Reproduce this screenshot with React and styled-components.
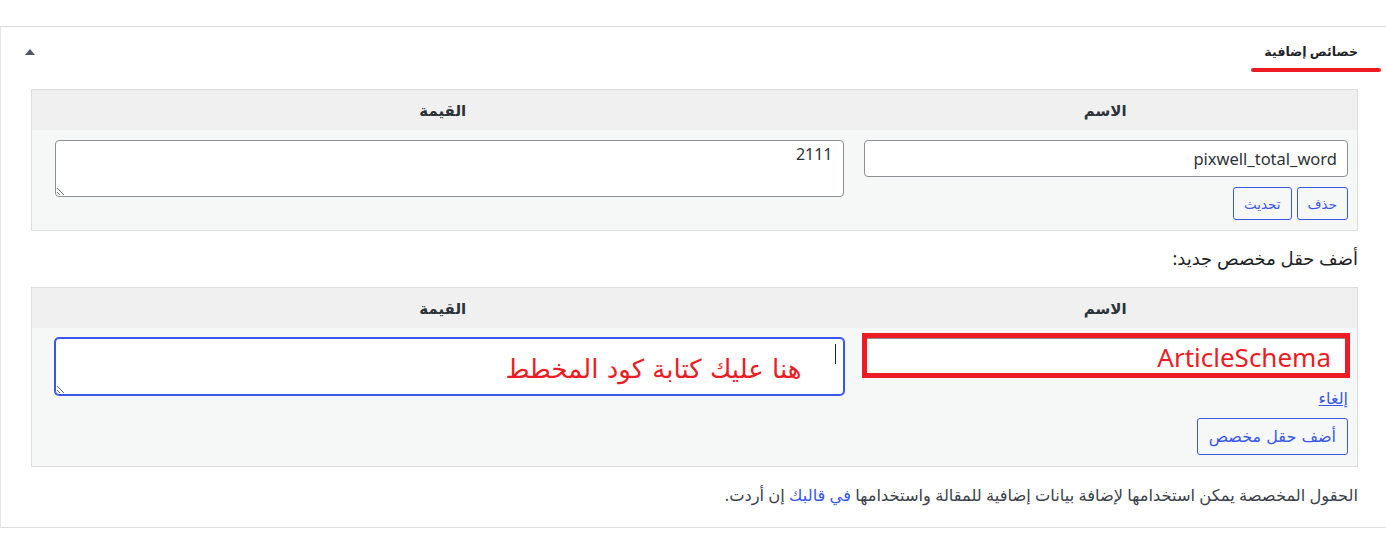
import React from "react";
import styled, { createGlobalStyle } from "styled-components";

const Global = createGlobalStyle`
  html, body { margin: 0; padding: 0; background: #fff; }
  body { font-family: "Noto Sans", "DejaVu Sans", sans-serif; color: #1d2327; }
`;

const Page = styled.div`
  padding-top: 26px;
  width: 1386px;
`;

const Postbox = styled.section`
  direction: rtl;
  border-top: 1px solid #dcdcde;
  border-bottom: 1px solid #dcdcde;
  border-left: 1px solid #e6e6e6;
  padding: 0 28px 22px 30px;
`;

const Header = styled.div`
  height: 50px;
  display: flex;
  align-items: center;
  justify-content: space-between;
  margin-right: -28px;
  margin-left: -30px;
  padding: 0 28px 0 23px;
`;

const Title = styled.h2`
  margin: 0;
  font-size: 12.6px;
  font-weight: 700;
  color: #1d2327;
  position: relative;
  line-height: 20px;
`;

const RedUnderline = styled.span`
  position: absolute;
  top: 26px;
  right: -23px;
  width: 130px;
  height: 4px;
  border-radius: 2px;
  background: #ed1c24;
`;

const Toggle = styled.button`
  border: 0;
  background: none;
  padding: 0;
  width: 12px;
  height: 12px;
  display: flex;
  align-items: center;
  justify-content: center;
`;

const Table = styled.table`
  width: 100%;
  border: 1px solid #dcdcde;
  border-spacing: 0;
  table-layout: fixed;
  margin-top: ${(p) => p.$top || 0}px;
`;

const Th = styled.th`
  background: #f0f0f1;
  height: 40px;
  padding: 0;
  font-size: 15px;
  font-weight: 700;
  color: #2c3338;
  text-align: center;
  width: ${(p) => p.$w || "auto"};
`;

const Td = styled.td`
  background: #f6f7f7;
  vertical-align: top;
  padding: ${(p) => p.$pad};
`;

const TextInput = styled.input`
  box-sizing: border-box;
  width: 100%;
  height: 37px;
  border: 1px solid #8c8f94;
  border-radius: 4px;
  background: #fff;
  padding: 0 ${(p) => p.$pr || 10}px 0 10px;
  font-family: "Noto Sans", sans-serif;
  font-size: ${(p) => p.$fs || 16.5}px;
  color: ${(p) => p.$color || "#2c3338"};
  direction: ltr;
  text-align: right;
  display: block;
  outline: none;
`;

const TextArea = styled.textarea`
  box-sizing: border-box;
  display: block;
  width: 100%;
  height: 57px;
  border: 1px solid ${(p) => (p.$focus ? "#3858e9" : "#8c8f94")};
  box-shadow: ${(p) => (p.$focus ? "0 0 0 1px #3858e9" : "none")};
  border-radius: 4px;
  background: #fff;
  padding: 2px 10px;
  font-family: "Noto Sans", sans-serif;
  font-size: 16px;
  color: #2c3338;
  direction: rtl;
  text-align: right;
  outline: none;
  resize: vertical;
`;

const ButtonRow = styled.div`
  display: flex;
  gap: 5px;
  margin-top: 10px;
`;

const Button = styled.button`
  height: ${(p) => p.$h || 33}px;
  padding: 0 ${(p) => p.$px || 10}px;
  border: 1px solid #3858e9;
  border-radius: 3px;
  background: #f6f7f7;
  color: #3858e9;
  font-family: "DejaVu Sans", sans-serif;
  font-size: ${(p) => p.$fs || 13.5}px;
  direction: rtl;
`;

const FieldWrap = styled.div`
  position: relative;
`;

const RedFrame = styled.span`
  position: absolute;
  top: -5px;
  bottom: -3px;
  left: -2px;
  right: -2px;
  border: 5px solid #ed1c24;
  pointer-events: none;
`;

const Overlay = styled.span`
  position: absolute;
  right: 42px;
  top: 14px;
  font-family: "DejaVu Sans", sans-serif;
  font-size: 26px;
  line-height: 34px;
  color: #ed1c24;
  direction: rtl;
  pointer-events: none;
`;

const Caret = styled.span`
  position: absolute;
  right: 8px;
  top: 6px;
  width: 1px;
  height: 20px;
  background: #1d2327;
`;

const CancelLink = styled.a`
  display: block;
  margin-top: 12px;
  font-size: 16px;
  line-height: 22px;
  color: #3858e9;
  text-decoration: underline;
`;

const SubmitWrap = styled.div`
  margin-top: 9px;
  display: flex;
`;

const SubHeading = styled.p`
  margin: 17px 0 19px;
  font-size: 18px;
  font-weight: 400;
  line-height: 20px;
  color: #1d2327;
`;

const Note = styled.p`
  margin: 18px 0 0;
  font-size: 16.3px;
  line-height: 20px;
  color: #3c434a;
`;

const Link = styled.a`
  color: #3858e9;
  text-decoration: none;
`;

export default function App() {
  return (
    <Page>
      <Global />
      <Postbox>
        <Header>
          <Title>
            خصائص إضافية
            <RedUnderline />
          </Title>
          <Toggle aria-label="toggle">
            <svg width="10" height="6" viewBox="0 0 10 6">
              <polygon points="5,0 10,6 0,6" fill="#50575e" />
            </svg>
          </Toggle>
        </Header>

        <Table $top={12}>
          <thead>
            <tr>
              <Th $w="38%">الاسم</Th>
              <Th>القيمة</Th>
            </tr>
          </thead>
          <tbody>
            <tr>
              <Td $pad="10px 9px 10px 10px">
                <TextInput defaultValue="pixwell_total_word" />
                <ButtonRow>
                  <Button>حذف</Button>
                  <Button>تحديث</Button>
                </ButtonRow>
              </Td>
              <Td $pad="10px 10px 10px 23px">
                <TextArea defaultValue="2111" />
              </Td>
            </tr>
          </tbody>
        </Table>

        <SubHeading>أضف حقل مخصص جديد:</SubHeading>

        <Table>
          <thead>
            <tr>
              <Th $w="38%">الاسم</Th>
              <Th>القيمة</Th>
            </tr>
          </thead>
          <tbody>
            <tr>
              <Td $pad="10px 9px 11px 10px">
                <FieldWrap>
                  <TextInput defaultValue="ArticleSchema" $fs={26} $pr={16} $color="#ed1c24" />
                  <RedFrame />
                </FieldWrap>
                <CancelLink href="#">إلغاء</CancelLink>
                <SubmitWrap>
                  <Button $h={37} $px={11} $fs={16}>أضف حقل مخصص</Button>
                </SubmitWrap>
              </Td>
              <Td $pad="10px 10px 11px 23px">
                <FieldWrap>
                  <TextArea $focus />
                  <Overlay>هنا عليك كتابة كود المخطط</Overlay>
                  <Caret />
                </FieldWrap>
              </Td>
            </tr>
          </tbody>
        </Table>

        <Note>
          الحقول المخصصة يمكن استخدامها لإضافة بيانات إضافية للمقالة واستخدامها <Link href="#">في قالبك</Link> إن أردت.
        </Note>
      </Postbox>
    </Page>
  );
}
